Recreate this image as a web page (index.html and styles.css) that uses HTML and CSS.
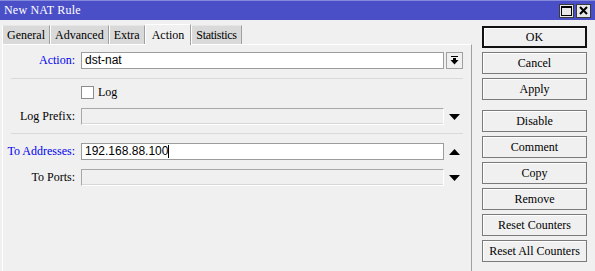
FILE: index.html
```html
<!DOCTYPE html>
<html lang="en">
<head>
  <meta charset="UTF-8">
  <title>New NAT Rule</title>
  <link rel="stylesheet" href="styles.css">
</head>
<body>

  <div class="window">
    <div class="titlebar">
      <span class="title">New NAT Rule</span>
      <div class="winbtns">
        <span class="winbtn">
          <svg width="11" height="10" viewBox="0 0 11 10"><rect x="0.5" y="0.5" width="10" height="9" fill="none" stroke="#000"/><rect x="0" y="0" width="11" height="2" fill="#000"/></svg>
        </span>
        <span class="winbtn">
          <svg width="9" height="9" viewBox="0 0 9 9"><path d="M1 1 L8 8 M8 1 L1 8" stroke="#000" stroke-width="2"/></svg>
        </span>
      </div>
    </div>

    <div class="main">
      <div class="left">
        <div class="tabs">
          <span class="tab">General</span>
          <span class="tab">Advanced</span>
          <span class="tab">Extra</span>
          <span class="tab active">Action</span>
          <span class="tab">Statistics</span>
        </div>

        <div class="panel">
          <div class="row">
            <label class="lbl link">Action:</label>
            <div class="field">dst-nat</div>
            <span class="dropbtn">
              <svg width="9" height="9" viewBox="0 0 9 9"><rect x="1" y="0" width="7" height="1" fill="#000"/><rect x="3" y="2" width="3" height="2" fill="#000"/><path d="M0.5 4 L8.5 4 L4.5 8.5 Z" fill="#000"/></svg>
            </span>
          </div>

          <div class="sep"></div>

          <div class="row check-row">
            <span class="lbl"></span>
            <span class="checkbox"></span>
            <span class="check-text">Log</span>
          </div>

          <div class="row last">
            <label class="lbl">Log Prefix:</label>
            <div class="field disabled"></div>
            <span class="arrow">
              <svg width="11" height="6" viewBox="0 0 11 6"><path d="M0 0 L11 0 L5.5 6 Z" fill="#000"/></svg>
            </span>
          </div>

          <div class="sep"></div>

          <div class="row after-sep">
            <label class="lbl link">To Addresses:</label>
            <div class="field">192.168.88.100<span class="caret"></span></div>
            <span class="arrow">
              <svg width="11" height="6" viewBox="0 0 11 6"><path d="M0 6 L11 6 L5.5 0 Z" fill="#000"/></svg>
            </span>
          </div>

          <div class="row">
            <label class="lbl">To Ports:</label>
            <div class="field disabled"></div>
            <span class="arrow">
              <svg width="11" height="6" viewBox="0 0 11 6"><path d="M0 0 L11 0 L5.5 6 Z" fill="#000"/></svg>
            </span>
          </div>
        </div>
      </div>

      <div class="side">
        <button class="btn default">OK</button>
        <button class="btn">Cancel</button>
        <button class="btn">Apply</button>
        <button class="btn spaced">Disable</button>
        <button class="btn">Comment</button>
        <button class="btn">Copy</button>
        <button class="btn">Remove</button>
        <button class="btn">Reset Counters</button>
        <button class="btn">Reset All Counters</button>
      </div>
    </div>
  </div>

</body>
</html>
```

FILE: styles.css
```css
body {
  margin: 0;
  padding: 0;
  background-color: #f0f0f0;
  font-family: "Liberation Serif", serif;
  font-size: 12px;
  color: #000;
}

.window {
  width: 595px;
  height: 271px;
  overflow: hidden;
  background-color: #f0f0f0;
}

.titlebar {
  height: 20px;
  box-sizing: border-box;
  border-top: 1px solid #8589dc;
  background-color: #4a4fc8;
  display: flex;
  align-items: center;
  justify-content: space-between;
  padding: 0 4px 0 4px;
}

.title {
  color: #fff;
  font-size: 12px;
  letter-spacing: 0.2px;
}

.winbtns {
  display: flex;
  gap: 2px;
}

.winbtn {
  width: 15px;
  height: 14px;
  box-sizing: border-box;
  border: 1px solid #3a3a3a;
  background-color: #e8e8e8;
  display: flex;
  align-items: center;
  justify-content: center;
}

.main {
  display: flex;
}

.left {
  width: 472px;
  padding-left: 2px;
  box-sizing: border-box;
}

.tabs {
  display: flex;
  height: 24px;
  align-items: flex-end;
  padding-left: 0;
}

.tab {
  height: 19px;
  box-sizing: border-box;
  padding: 0 4px;
  line-height: 18px;
  background-color: #d9d9d9;
  border-left: 1px solid #fff;
  border-right: 1px solid #a0a0a0;
  border-top: 1px solid #e6e6e6;
}

.tab:last-child {
  letter-spacing: -0.3px;
}

.tab.active {
  height: 21px;
  line-height: 20px;
  padding: 0 6px;
  background-color: #f0f0f0;
  border-top: 1px solid #fff;
  margin-bottom: -1px;
}

.panel {
  height: 240px;
  box-sizing: border-box;
  border-top: 1px solid #fff;
  border-left: 1px solid #fff;
  border-right: 1px solid #a0a0a0;
  padding-top: 7px;
}

.row {
  display: flex;
  align-items: center;
  height: 17px;
  margin-bottom: 9px;
}

.row.last {
  margin-bottom: 8px;
}

.row.after-sep {
  margin-top: 9px;
}

.lbl {
  width: 72px;
  text-align: right;
  margin-right: 6px;
  flex-shrink: 0;
}

.link {
  color: #0000ee;
}

.field {
  width: 363px;
  height: 17px;
  box-sizing: border-box;
  border: 1px solid #9c9c9c;
  background-color: #fff;
  font-family: "Liberation Sans", sans-serif;
  font-size: 12px;
  line-height: 15px;
  padding-left: 3px;
  display: flex;
  align-items: center;
}

.field.disabled {
  background-color: #f0f0f0;
  border-color: #a8a8a8;
  border-bottom-color: #fff;
  border-right-color: #fff;
  box-shadow: inset 0 -1px 0 #d8d8d8;
}

.caret {
  display: inline-block;
  width: 1px;
  height: 13px;
  background-color: #000;
}

.dropbtn {
  width: 17px;
  height: 17px;
  box-sizing: border-box;
  margin-left: 2px;
  border: 1px solid #a0a0a0;
  background-color: #f0f0f0;
  display: flex;
  align-items: center;
  justify-content: center;
}

.arrow {
  width: 17px;
  margin-left: 5px;
  display: flex;
  align-items: center;
}

.sep {
  height: 1px;
  background-color: #d9d9d9;
  margin: 0 8px 0 8px;
}

.check-row {
  margin-top: 6px;
  height: 14px;
  margin-bottom: 9px;
}

.checkbox {
  width: 13px;
  height: 13px;
  box-sizing: border-box;
  border: 1px solid #8c8c8c;
  background-color: #fff;
  margin-right: 4px;
}

.side {
  display: flex;
  flex-direction: column;
  padding: 6px 0 0 10px;
  gap: 4px;
}

.btn {
  width: 105px;
  height: 22px;
  box-sizing: border-box;
  font-family: "Liberation Serif", serif;
  font-size: 12px;
  color: #000;
  background-color: #f0f0f0;
  border: 1px solid #7a7a7a;
  box-shadow: inset 1px 1px 0 #fff;
  padding: 0;
}

.btn.default {
  border: 2px solid #111;
}

.btn.spaced {
  margin-top: 6px;
}
```
